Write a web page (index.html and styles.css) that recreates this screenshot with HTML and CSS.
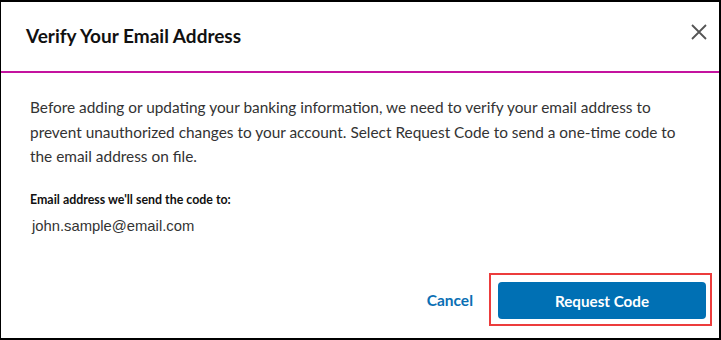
FILE: index.html
```html
<!DOCTYPE html>
<html lang="en">
<head>
<meta charset="utf-8">
<title>Verify Your Email Address</title>
<link rel="stylesheet" href="styles.css">
</head>
<body>
<div class="dialog">
  <header class="dialog-header">
    <h1 class="dialog-title">Verify Your Email Address</h1>
    <button class="close-btn" aria-label="Close">
      <svg width="16" height="16" viewBox="0 0 16 16"><path d="M1 1 L15 15 M15 1 L1 15" stroke="#555" stroke-width="1.8" fill="none"/></svg>
    </button>
  </header>
  <div class="dialog-body">
    <p class="intro">Before adding or updating your banking information, we need to verify your email address to prevent unauthorized changes to your account. Select Request Code to send a one-time code to the email address on file.</p>
    <div class="field-label">Email address we'll send the code to:</div>
    <div class="field-value">john.sample@email.com</div>
  </div>
  <footer class="dialog-footer">
    <button class="btn-link">Cancel</button>
    <div class="highlight">
      <button class="btn-primary">Request Code</button>
    </div>
  </footer>
</div>
</body>
</html>
```

FILE: styles.css
```css
* { box-sizing: border-box; }
html, body { margin: 0; padding: 0; background: #fff; }
.dialog {
  width: 721px;
  height: 340px;
  border: 2px solid #000;
  border-left-width: 1px;
  display: flex;
  flex-direction: column;
  font-family: Lato, "Open Sans", sans-serif;
  color: #333;
}
.dialog-header {
  height: 71px;
  display: flex;
  align-items: center;
  justify-content: space-between;
  padding: 0 12px 2px 25px;
  border-bottom: 2px solid #c4139f;
}
.dialog-title {
  margin: 0;
  font-size: 19px;
  font-weight: 700;
  color: #111;
}
.close-btn {
  background: none;
  border: 0;
  padding: 0;
  width: 16px;
  height: 16px;
  margin-top: -8px;
  cursor: pointer;
}
.close-btn svg { display: block; }
.dialog-body {
  padding: 22px 20px 0 29px;
  flex: 1;
}
.intro {
  margin: 0 0 23px;
  font-size: 15.4px;
  line-height: 24.5px;
  color: #333;
}
.field-label {
  font-size: 12.4px;
  font-weight: 700;
  color: #111;
  margin-bottom: 11px;
}
.field-value {
  font-family: "Liberation Sans", Arial, sans-serif;
  font-size: 14.8px;
  color: #333;
  padding-left: 2px;
}
.dialog-footer {
  display: flex;
  justify-content: flex-end;
  align-items: center;
  gap: 16px;
  padding: 0 7px 12px 0;
}
.btn-link {
  background: none;
  border: 0;
  font-family: inherit;
  font-size: 15.5px;
  font-weight: 700;
  color: #0a6fb4;
  padding: 0;
  cursor: pointer;
}
.highlight {
  border: 2px solid #ec3c3c;
  padding: 7px 4px 5px 7px;
}
.btn-primary {
  display: block;
  width: 208px;
  height: 37px;
  background: #0070b4;
  color: #fff;
  border: 0;
  border-radius: 4px;
  font-family: inherit;
  font-size: 15.2px;
  font-weight: 700;
  cursor: pointer;
}
```
